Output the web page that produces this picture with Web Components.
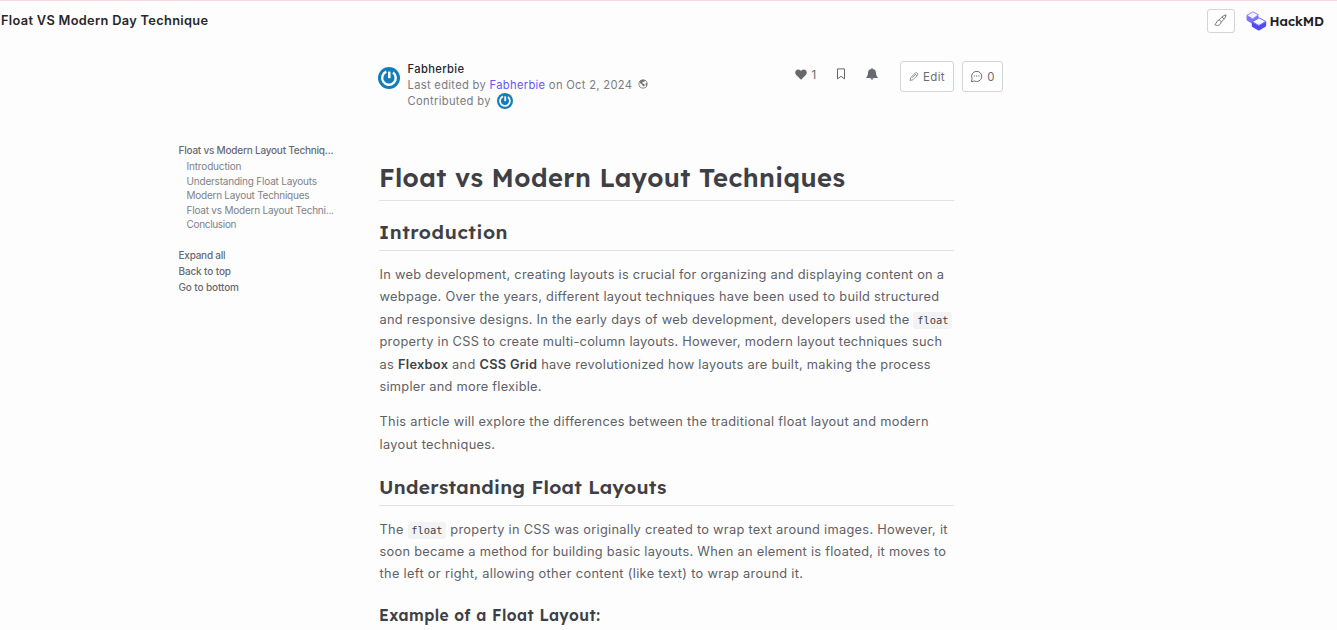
<!DOCTYPE html>
<html lang="en"><head><meta charset="utf-8"><title>Float VS Modern Day Technique - HackMD</title>
<style>
html,body{margin:0;height:630px;overflow:hidden}
body{background:#fdfdfd;font-family:Inter,"Liberation Sans",sans-serif;color:#5f6066}
</style></head><body><note-page></note-page>
<script>
const define=(name,html,setup)=>customElements.define(name,class extends HTMLElement{
  connectedCallback(){ if(this.shadowRoot)return; const r=this.attachShadow({mode:'open'}); r.innerHTML=html; if(setup)setup(this,r); }
});

/* One line of text, tracked so that it spans the measure given in "w". */
define('text-line',`<style>:host{display:block;white-space:nowrap}span{display:inline-block;line-height:inherit}</style><span><slot></slot></span>`,(el,r)=>{
  const w=+el.getAttribute('w'); if(!w)return;
  const s=r.querySelector('span'); s.style.letterSpacing='0px';
  let n=el.textContent.length; el.querySelectorAll('code').forEach(c=>n-=c.textContent.length);
  s.style.letterSpacing=((w-s.getBoundingClientRect().width)/Math.max(1,n-1)).toFixed(4)+'px';
});

define('ui-button',`<style>:host{display:flex;box-sizing:border-box;align-items:center;justify-content:center;border:1px solid #d4d4d8;border-radius:3px;background:#fff;color:#6c6d74}</style><slot></slot>`);

const icons={
brush:['0 0 14 14','<path d="M13 1C10 1.600 7.200 3.800 5.700 6.200l2.200 2.200C10.400 6.800 12.600 4 13 1zM8.700 3.200l2.200 2.200M5.600 6.600C2.700 6.200 3.300 10.300.8 11.500c2.600 1.600 6.700.9 6.800-2.900" fill="none" stroke="currentColor" stroke-width="1" stroke-linejoin="round"/>'],
pencil:['0 0 12 12','<path d="M1.3 10.7l.7-3.3 5.6-5.6q1-.9 2-.1l.7.8q.8.9-.1 1.900L4.600 10zM6.800 2.700l2.600 2.600M3.700 7.500l3.500-3.500" fill="none" stroke="currentColor" stroke-width=".9" stroke-linejoin="round"/>'],
comment:['0 0 13 13','<path d="M1.3 11.7l.8-3A5.1 5.1 0 1 1 4.400 11z" fill="none" stroke="currentColor" stroke-width="1" stroke-linejoin="round"/><path d="M3.700 6h1.200M6 6h1.200M8.300 6h1.200" stroke="currentColor" stroke-width="1.200"/>'],
heart:['0 0 12 11','<path d="M6 10.700L1.200 6C-.9 3.600.6.4 3.200.4 4.600.4 5.500 1.200 6 2 6.500 1.200 7.400.4 8.800.4 11.400.4 12.900 3.600 10.800 6z" fill="currentColor"/>'],
bookmark:['0 0 10 12','<path d="M1.500.9h7v10L5 8.300 1.500 10.900z" fill="none" stroke="currentColor" stroke-width="1"/>'],
bell:['0 0 12 12','<path d="M6 .2c.6 0 .8.4.8.9 2.300.5 3.200 2.100 3.300 4.200.1 1.700.3 2.700 1.500 3.700v.9H.4V9c1.200-1 1.400-2 1.500-3.700.1-2.100 1-3.700 3.300-4.200 0-.5.2-.9.8-.9zM4.400 10.300h3.200q-.3 1.400-1.600 1.400t-1.600-1.400z" fill="currentColor"/>'],
globe:['0 0 10 10','<circle cx="5" cy="5" r="4.100" fill="#fdfdfd" stroke="#7c7d84" stroke-width=".9"/><path d="M3 1.300C4.500.4 6.400.6 7.300 1.500L6 2.700 4.600 3.100 4.300 4.300l1.900.6.6 1.500-.9 1.100-1.400-.9-.7-1.500-1.300-.6-.9-1.200zM7.400 4.400l1.800-.1-.3 2-1 .6z" fill="#707178"/>'],
power:['0 0 22 22','<circle cx="11" cy="11" r="11" fill="#147db9"/><path d="M8.300 4.700a6.800 6.800 0 1 0 6.700.8" fill="none" stroke="#fff" stroke-width="2.400"/><path d="M11.300 4.600v6.600" stroke="#fff" stroke-width="2.500"/>'],
logo:['0 0 21 20','<path d="M.6 4.300v4.500q0 .7.6 1l4.600 2.600 6.800-3.800V5z" fill="#7a73fc"/><path d="M.9 4.300L6.200 1.200q.7-.4 1.400 0l4.900 2.600-5.800 4.100z" fill="#f5f5ff" stroke="#8a85fa" stroke-width="1" stroke-linejoin="round"/><path d="M5.800 10.900v3.900q0 .7.600 1.100l5.500 3.400q.8.500 1.600 0l6-3.500q.7-.4.7-1.200v-4.200l-7.400 4.100z" fill="#5148fa"/><path d="M6.300 10.700l6-3.400q.9-.4 1.700 0l5.700 3.100-5.900 3.700q-.9.5-1.800 0z" fill="#f7f7ff" stroke="#6a62fa" stroke-width="1" stroke-linejoin="round"/>']};
define('ui-icon',`<style>:host{display:block;flex:none}svg{display:block;width:100%;height:100%}</style><svg></svg>`,(el,r)=>{
  const [box,path]=icons[el.getAttribute('name')]; const s=r.querySelector('svg'); s.setAttribute('viewBox',box); s.innerHTML=path;
  el.style.width=el.getAttribute('x')+'px'; el.style.height=el.getAttribute('y')+'px';
});

define('top-bar',`<style>:host{display:flex;box-sizing:border-box;height:42px;border-top:1px solid #f8d7de;padding:0 13px 0 1px;align-items:flex-start}
.t{font-size:12.8px;font-weight:600;color:#27272a;line-height:16px;margin-top:12px;flex:1}
ui-button{width:28px;height:24px;margin:8px 11px 0 0}ui-button ui-icon{margin:-2px 1px 0 0}ui-icon.l{margin-top:10px}
.b{font:600 13px/18px Lexend,Inter,sans-serif;color:#222226;margin:11px 0 0 2.500px;width:54.500px}</style>
<text-line class="t" w="207">Float VS Modern Day Technique</text-line><ui-button><ui-icon name="brush" x="13" y="13"></ui-icon></ui-button><ui-icon class="l" name="logo" x="21" y="20"></ui-icon><text-line class="b" w="54.500">HackMD</text-line>`);

define('note-info',`<style>:host{display:flex;box-sizing:border-box;height:100px;padding:19px 0 0 378px;font-size:11.200px;line-height:16px;color:#7a7b81}
.av{margin:6px 7.500px 0 0}.m{width:387.500px}.row{display:flex;height:16px;align-items:center}.n{color:#27272a;font-weight:500}
.g{margin:-3px 0 0 6px}.p{margin-left:6.500px}.act{display:flex;color:#68696f;align-items:flex-start}
.act>ui-icon{margin-top:8px}.act>text-line{margin:6px 0 0 4.500px;font-size:11.500px;width:6px}.act>.bm{margin:7px 0 0 18.500px}.act>.bl{margin:7px 0 0 20px}
ui-button{height:31px;font-size:11.500px;gap:4px}.e{width:54px;margin-left:22px}.c{width:41px;margin-left:8px}</style>
<ui-icon class="av" name="power" x="22" y="22"></ui-icon>
<div class="m"><div class="row"><text-line class="n" w="56.500">Fabherbie</text-line></div>
<div class="row"><text-line w="224.500">Last edited by <a style="color:#6457f5">Fabherbie</a> on Oct 2, 2024</text-line><ui-icon class="g" name="globe" x="10" y="10"></ui-icon></div>
<div class="row"><text-line w="83">Contributed by</text-line><ui-icon class="p" name="power" x="16" y="16"></ui-icon></div></div>
<div class="act"><ui-icon name="heart" x="12" y="11"></ui-icon><text-line>1</text-line><ui-icon class="bm" name="bookmark" x="10" y="12"></ui-icon><ui-icon class="bl" name="bell" x="12" y="12"></ui-icon>
<ui-button class="e"><ui-icon name="pencil" x="10" y="11"></ui-icon><text-line w="21.500">Edit</text-line></ui-button><ui-button class="c"><ui-icon name="comment" x="13" y="13"></ui-icon><text-line>0</text-line></ui-button></div>`);

define('note-toc',`<style>:host{display:block;width:200.500px;font-size:10px;line-height:16px;color:#696a71;font-weight:500}
.s{padding:1px 0 0 8px;line-height:14.500px;font-weight:400;color:#808187}.f{margin-top:15px}text-line{width:max-content}</style>
<text-line w="155">Float vs Modern Layout Techniq...</text-line><div class="s"><text-line w="55">Introduction</text-line><text-line w="130.500">Understanding Float Layouts</text-line><text-line w="123">Modern Layout Techniques</text-line><text-line w="147.500">Float vs Modern Layout Techni...</text-line><text-line w="50">Conclusion</text-line></div>
<div class="f"><text-line w="47">Expand all</text-line><text-line w="52.500">Back to top</text-line><text-line w="60.500">Go to bottom</text-line></div>`);

define('note-heading',`<style>:host{display:block;box-sizing:border-box;color:#3f3f46;font-family:Lexend,Inter,sans-serif;font-weight:600}
:host([level="1"]){font-size:25.600px;line-height:38px;height:43px;border-bottom:1px solid #e2e2e4}
:host([level="2"]){font-size:19.200px;line-height:30px;height:34px;border-bottom:1px solid #e2e2e4}
:host([level="3"]){font-size:15.500px;line-height:24px}</style><slot></slot>`);
define('note-paragraph',`<style>:host{display:block;font-size:12.800px;line-height:22.400px}::slotted(text-line){height:22.400px}</style><slot></slot>`);

define('note-article',`<style>:host{display:block;width:575px;padding-top:16px}.i{margin-top:16px}.p1{margin-top:13px}.p2{margin-top:12.800px}.u{margin-top:16.500px}.p3{margin-top:12.500px}.x{margin-top:18px}note-paragraph text-line{padding-left:.5px}
code{font:10.400px/13px "DejaVu Sans Mono",monospace;letter-spacing:0;background:#f3f3f3;border-radius:3px;color:#3f3f44;padding:2px 3.800px;display:inline-block;height:13px}b{font-weight:600;color:#3f3f45}.p3 text-line{height:22.200px}</style>
<note-heading level="1"><text-line w="466">Float vs Modern Layout Techniques</text-line></note-heading>
<note-heading level="2" class="i"><text-line w="128.500">Introduction</text-line></note-heading>
<note-paragraph class="p1"><text-line w="564.500">In web development, creating layouts is crucial for organizing and displaying content on a</text-line><text-line w="559.500">webpage. Over the years, different layout techniques have been used to build structured</text-line><text-line w="572.500">and responsive designs. In the early days of web development, developers used the <code>float</code></text-line><text-line w="562.500">property in CSS to create multi-column layouts. However, modern layout techniques such</text-line><text-line w="551">as <b>Flexbox</b> and <b>CSS Grid</b> have revolutionized how layouts are built, making the process</text-line><text-line w="162">simpler and more flexible.</text-line></note-paragraph>
<note-paragraph class="p2"><text-line w="549">This article will explore the differences between the traditional float layout and modern</text-line><text-line w="115.500">layout techniques.</text-line></note-paragraph>
<note-heading level="2" class="u"><text-line w="287.500">Understanding Float Layouts</text-line></note-heading>
<note-paragraph class="p3"><text-line w="568">The <code>float</code> property in CSS was originally created to wrap text around images. However, it</text-line><text-line w="566.500">soon became a method for building basic layouts. When an element is floated, it moves to</text-line><text-line w="423.500">the left or right, allowing other content (like text) to wrap around it.</text-line></note-paragraph>
<note-heading level="3" class="x"><text-line w="221">Example of a Float Layout:</text-line></note-heading>`);

define('note-page',`<style>:host{display:block}main{display:flex;align-items:flex-start;padding-left:178.500px}</style><top-bar></top-bar><note-info></note-info><main><note-toc></note-toc><note-article></note-article></main>`);
</script></body></html>
